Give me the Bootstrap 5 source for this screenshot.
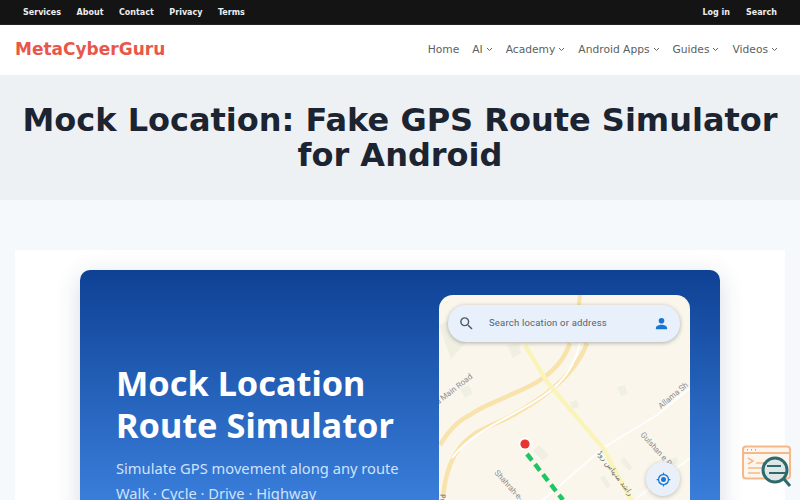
<!DOCTYPE html>
<html lang="en">
<head>
    <meta charset="UTF-8">
    <meta name="viewport" content="width=device-width, initial-scale=1.0">
    <title>Mock Location: Fake GPS Route Simulator for Android</title>
    <link rel="stylesheet" href="https://cdn.jsdelivr.net/npm/bootstrap@5.3.2/dist/css/bootstrap.min.css">
    <style>
        html, body { height: 500px; overflow: hidden; }
        body { background: #f6f9fc; font-family: "DejaVu Sans", sans-serif; }
        .mini-bar { background: #141414; height: 25px; padding: 2px 23px 0; font-size: 8px; font-weight: 700; border-bottom: 1px solid #222; }
        .mini-bar a { color: #eee; text-decoration: none; }
        .mini-left { gap: 15.500px; }
        .mini-right { gap: 16px; }
        .main-bar { height: 50px; background: #fff; padding: 0 22px 0 15px; }
        .brand-name { color: #e8574a; font-size: 17px; font-weight: 700; text-decoration: none; }
        .main-links { gap: 13px; font-size: 10.700px; }
        .main-links a { color: #5c5f62; text-decoration: none; }
        .caret-mark { width: 7px; height: 5px; margin-left: 3px; }
        .title-band { height: 125px; background: #eef1f4; }
        .title-band h1 { font-family: "DejaVu Sans", sans-serif; font-size: 32px; line-height: 35px; font-weight: 700; color: #1b2430; margin: 0; }
        .body-wrap { padding: 50px 15px 0; }
        .white-panel { background: #fff; padding: 20px 65px 0; height: 250px; }
        .hero-box { height: 300px; border-radius: 10px; background: linear-gradient(180deg, #0e4194 0, #3a7fdc 235px); box-shadow: 0 6px 24px rgba(20, 50, 100, .18); padding: 25px 30px 0 36px; }
        .hero-copy { width: 323px; padding-top: 67px; }
        .hero-copy h2 { font-family: "Noto Sans", sans-serif; font-size: 34.300px; line-height: 42px; font-weight: 700; color: #fff; margin: 0 0 10px; }
        .hero-copy p { font-family: "Noto Sans", sans-serif; font-size: 14.700px; line-height: 25px; color: #cfe2fb; margin: 0; white-space: nowrap; }
        .phone-map { position: relative; width: 251px; height: 380px; border-radius: 14px; background: #faf6ec; overflow: hidden; }
        .phone-map svg.map-art { position: absolute; inset: 0; width: 251px; height: 380px; }
        .search-pill { position: absolute; left: 9px; top: 10px; width: 232px; height: 37px; border-radius: 18px; background: #e8f0fb; box-shadow: 0 1px 4px rgba(60, 64, 67, .4); padding: 0 11px 0 10px; font-family: "Roboto", sans-serif; font-size: 9.500px; letter-spacing: .2px; color: #55606e; }
        .map-label { font-family: "Roboto", sans-serif; font-size: 8px; fill: #8a8d90; }
        .road-label { font-family: "DejaVu Sans", sans-serif; font-size: 7.500px; fill: #6f7172; }
        .locate-btn { position: absolute; left: 207px; top: 167px; width: 34px; height: 34px; border-radius: 50%; background: #e9f0f9; box-shadow: 0 1px 4px rgba(60, 64, 67, .3); }
        .float-logo { position: fixed; left: 741px; top: 445px; width: 52px; height: 46px; }
    </style>
</head>
<body>
    <!-- Top links -->
    <div class="mini-bar d-flex justify-content-between align-items-center">
        <div class="mini-left d-flex">
            <a href="#">Services</a><a href="#">About</a><a href="#">Contact</a><a href="#">Privacy</a><a href="#">Terms</a>
        </div>
        <div class="mini-right d-flex">
            <a href="#">Log in</a><a href="#">Search</a>
        </div>
    </div>

    <!-- Main nav -->
    <nav class="main-bar d-flex justify-content-between align-items-center">
        <a class="brand-name" href="#">MetaCyberGuru</a>
        <div class="main-links d-flex align-items-center">
            <a href="#">Home</a>
            <a href="#">AI<svg class="caret-mark" viewBox="0 0 7 5"><path d="M1 1l2.500 2.500L6 1" fill="none" stroke="#666" stroke-width="1"/></svg></a>
            <a href="#">Academy<svg class="caret-mark" viewBox="0 0 7 5"><path d="M1 1l2.500 2.500L6 1" fill="none" stroke="#666" stroke-width="1"/></svg></a>
            <a href="#">Android Apps<svg class="caret-mark" viewBox="0 0 7 5"><path d="M1 1l2.500 2.500L6 1" fill="none" stroke="#666" stroke-width="1"/></svg></a>
            <a href="#">Guides<svg class="caret-mark" viewBox="0 0 7 5"><path d="M1 1l2.500 2.500L6 1" fill="none" stroke="#666" stroke-width="1"/></svg></a>
            <a href="#">Videos<svg class="caret-mark" viewBox="0 0 7 5"><path d="M1 1l2.500 2.500L6 1" fill="none" stroke="#666" stroke-width="1"/></svg></a>
        </div>
    </nav>

    <!-- Page title -->
    <header class="title-band d-flex align-items-center justify-content-center text-center">
        <h1>Mock Location: Fake GPS Route Simulator<br>for Android</h1>
    </header>

    <div class="body-wrap">
        <div class="white-panel">
            <div class="hero-box d-flex justify-content-between">
                <div class="hero-copy">
                    <h2>Mock Location<br>Route Simulator</h2>
                    <p>Simulate GPS movement along any route</p>
                    <p>Walk · Cycle · Drive · Highway</p>
                </div>
                <div class="phone-map">
                    <svg class="map-art" viewBox="0 0 251 380">
                        <!-- blocks -->
                        <g fill="#f0f0e2">
                            <path d="M0 30l18-8 12 22-18 20z"/>
                            <path d="M21 94l9-4 4 9-8 4z"/>
                            <path d="M68 50l12-2 2 10-8 5z"/>
                            <path d="M178 92l8-2 3 9-7 2z"/>
                            <path d="M131 107l7-2 2 7-7 2z"/>
                            <path d="M94 156l6-6 10 10-6 6z"/>
                            <path d="M181 166l4-4 9 11-4 3z"/>
                            <path d="M161 183l4-3 7 11-4 3z"/>
                            <path d="M231 164l7-2 1 6-7 2z"/>
                        </g>
                        <!-- main roads -->
                        <path d="M1 150C10 135 20 125 31 120C45 110 60 106 71 100C85 94 95 90 104 83C118 73 127 60 131 48" fill="none" stroke="#f8e3ac" stroke-width="4.500"/>
                        <path d="M4 203C5 190 8 178 11 170C17 155 25 146 34 140C45 132 60 128 74 120C90 111 103 103 114 93C128 82 142 65 148 48" fill="none" stroke="#f8e3ac" stroke-width="4.500"/>
                        <path d="M13 163C40 128 90 118 120 88C130 78 137 65 141 48" fill="none" stroke="#fff" stroke-width="2"/>
                        <path d="M251 93L218 120L164 153L118 193L100 208" fill="none" stroke="#fff" stroke-width="2" opacity=".85"/>
                        <path d="M198 203L251 163" fill="none" stroke="#fff" stroke-width="2" opacity=".85"/>
                        <path d="M86 50L108 87L164 153L191 203L200 215" fill="none" stroke="#faf4bb" stroke-width="4.500"/>
                        <path d="M141 0L139 20" fill="none" stroke="#f8e3ac" stroke-width="4"/>
                        <!-- labels -->
                        <text class="map-label" transform="translate(-1 110) rotate(-38)">d Main Road</text>
                        <text class="map-label" transform="translate(222 114) rotate(-40)">Allama Sh</text>
                        <text class="map-label" transform="translate(201 140) rotate(48)">Gulshan e R</text>
                        <text class="map-label" transform="translate(55 178) rotate(48)">Shahrah-e-</text>
                        <text class="road-label" transform="translate(158 158) rotate(53)">راشد منہاس روڈ</text>
                        <text class="road-label" transform="translate(1 199) rotate(90)">Pri</text>
                        <!-- route -->
                        <path d="M88 159L124 205" fill="none" stroke="#20c565" stroke-width="4.500" stroke-dasharray="8 5"/>
                        <circle cx="86" cy="149" r="6.500" fill="#fff" opacity=".85"/>
                        <circle cx="86" cy="149" r="4.600" fill="#e8342f"/>
                    </svg>
                    <div class="search-pill d-flex align-items-center">
                        <svg width="17" height="17" viewBox="0 0 24 24" fill="#4d5a6a"><path d="M15.500 14h-.79l-.28-.27A6.471 6.471 0 0 0 16 9.500 6.500 6.500 0 1 0 9.500 16c1.610 0 3.090-.59 4.230-1.570l.27.28v.79l5 4.990L20.490 19l-4.990-5zm-6 0C7.010 14 5 11.990 5 9.500S7.010 5 9.500 5 14 7.010 14 9.500 11.990 14 9.500 14z"/></svg>
                        <span class="flex-grow-1" style="margin-left:14px">Search location or address</span>
                        <svg width="15" height="15" viewBox="0 0 24 24" fill="#1976d2"><path d="M12 12a4.500 4.500 0 1 0 0-9 4.500 4.500 0 0 0 0 9zm0 2c-3.300 0-9 1.700-9 5v2h18v-2c0-3.300-5.700-5-9-5z"/></svg>
                    </div>
                    <div class="locate-btn d-flex align-items-center justify-content-center">
                        <svg width="15" height="15" viewBox="0 0 24 24" fill="#1976d2"><path d="M12 8a4 4 0 1 0 0 8 4 4 0 0 0 0-8zm8.900 3A9 9 0 0 0 13 3.100V1h-2v2.100A9 9 0 0 0 3.100 11H1v2h2.100A9 9 0 0 0 11 20.900V23h2v-2.100a9 9 0 0 0 7.900-7.900H23v-2zM12 19a7 7 0 1 1 0-14 7 7 0 0 1 0 14z"/></svg>
                    </div>
                </div>
            </div>
        </div>
    </div>

    <!-- Floating logo -->
    <svg class="float-logo" viewBox="0 0 52 46">
        <rect x="2" y="1.500" width="47" height="32" rx="3" fill="#fdf6ee" stroke="#f3b98a" stroke-width="2"/>
        <path d="M2 8h47" stroke="#f3b98a" stroke-width="2"/>
        <path d="M6 4.800h1M10 4.800h1M14 4.800h1" stroke="#d99a68" stroke-width="1.500"/>
        <path d="M7 13l5 3-5 3M15 18h8M7 23h14M7 28h12" fill="none" stroke="#f3b98a" stroke-width="1.500"/>
        <circle cx="34" cy="25" r="12" fill="#dfe7e6" stroke="#2c6a6e" stroke-width="3"/>
        <path d="M26 21h14M28 28h16" stroke="#2c6a6e" stroke-width="2"/>
        <path d="M43 34l6 7" stroke="#2c6a6e" stroke-width="3"/>
    </svg>

    <script src="https://cdn.jsdelivr.net/npm/bootstrap@5.3.2/dist/js/bootstrap.bundle.min.js"></script>
</body>
</html>
